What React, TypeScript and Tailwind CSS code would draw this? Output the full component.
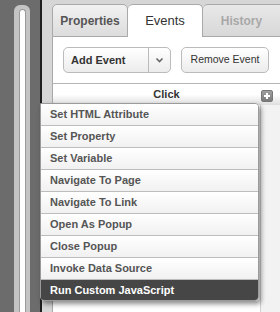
import React from "react";

const actions = [
  "Set HTML Attribute",
  "Set Property",
  "Set Variable",
  "Navigate To Page",
  "Navigate To Link",
  "Open As Popup",
  "Close Popup",
  "Invoke Data Source",
  "Run Custom JavaScript",
];

const App = () => {
  return (
    <div className="relative flex w-[280px] h-[312px] overflow-hidden bg-[#6c6c6c] font-['Liberation_Sans',Arial,sans-serif]">
      {/* left scroll strip */}
      <div className="w-[40px] h-full pt-[5px] pl-[14px]">
        <div className="w-[16px] h-full rounded-t-[6px] bg-[#c4c4c4] pt-[4px] pl-[5px]">
          <div className="w-[7px] h-full rounded-t-[4px] bg-white border border-[#9a9a9a] border-b-0" />
        </div>
      </div>
      <div className="w-[2px] h-full bg-[#1e1e1e]" />
      <div className="w-[10px] h-full bg-[#d6d6d6]" />

      {/* panel */}
      <div className="flex-1 flex flex-col bg-[#d6d6d6]">
        <div className="flex pt-[4px] text-[12px]">
          <div className="w-[76px] h-[33px] flex items-center justify-center rounded-t-[5px] border border-[#a9a9a9] bg-gradient-to-b from-[#f2f2f2] to-[#dcdcdc] font-bold text-[#555]">
            Properties
          </div>
          <div className="w-[75px] h-[33px] flex items-center justify-center rounded-t-[5px] border border-b-0 border-l-0 border-[#a9a9a9] bg-white text-[13px] text-[#333]">
            Events
          </div>
          <div className="flex-1 h-[33px] flex items-center justify-center rounded-tl-[5px] border border-l-0 border-r-0 border-[#a9a9a9] bg-gradient-to-b from-[#e8e8e8] to-[#d8d8d8] font-bold text-[#a8a8a8]">
            History
          </div>
        </div>

        <div className="flex-1 flex flex-col bg-white border-l border-[#a9a9a9]">
          <div className="flex items-center gap-[10px] pl-[10px] pt-[10px] pb-[10px] border-b border-[#b5b5b5]">
            <div className="flex w-[108px] h-[26px] rounded-[5px] border border-[#bbb] bg-gradient-to-b from-white to-[#ececec]">
              <div className="flex-1 flex items-center pl-[7px] text-[11px] font-bold text-[#333]">
                Add Event
              </div>
              <div className="w-[22px] flex items-center justify-center border-l border-[#bbb]">
                <svg width="9" height="6" viewBox="0 0 9 6">
                  <path d="M1.5 1.5 L4.5 4.5 L7.5 1.5" fill="none" stroke="#666" strokeWidth="1.6" />
                </svg>
              </div>
            </div>
            <div className="w-[88px] h-[26px] flex items-center justify-center rounded-[5px] border border-[#bbb] bg-gradient-to-b from-white to-[#ececec] text-[10.5px] text-[#333]">
              Remove Event
            </div>
          </div>

          <div className="relative h-[21px] flex items-center justify-center bg-gradient-to-b from-white via-white to-[#dedede] text-[11px] font-bold text-[#333]">
            Click
            <div className="absolute right-[7px] top-[6px] w-[12px] h-[12px] rounded-[2px] bg-gradient-to-b from-[#a0a0a0] to-[#7a7a7a] border border-[#777] flex items-center justify-center">
              <svg width="8" height="8" viewBox="0 0 8 8">
                <path d="M4 1 V7 M1 4 H7" stroke="#fff" strokeWidth="2" />
              </svg>
            </div>
          </div>

          <div className="flex-1 flex">
            <div className="w-[208px] border-r border-[#d0d0d0]" />
            <div className="flex-1 bg-[#f2f2f2]" />
          </div>
        </div>
      </div>

      {/* action menu */}
      <div className="absolute left-[40px] top-[103px] w-[219px] flex flex-col rounded-tr-[4px] rounded-b-[4px] border border-[#9a9a9a] shadow-[2px_3px_5px_rgba(0,0,0,0.45)] overflow-hidden">
        {actions.map((a, i) =>
          i === actions.length - 1 ? (
            <div
              key={a}
              className="h-[20px] flex items-center pl-[9px] bg-[#464646] text-[11px] font-bold text-white"
            >
              {a}
            </div>
          ) : (
            <div
              key={a}
              className="h-[22px] flex items-center pl-[9px] border-b border-[#bdbdbd] bg-gradient-to-b from-white to-[#f1f1f1] text-[11px] font-bold text-[#555]"
            >
              {a}
            </div>
          )
        )}
      </div>
    </div>
  );
};

export default App;
